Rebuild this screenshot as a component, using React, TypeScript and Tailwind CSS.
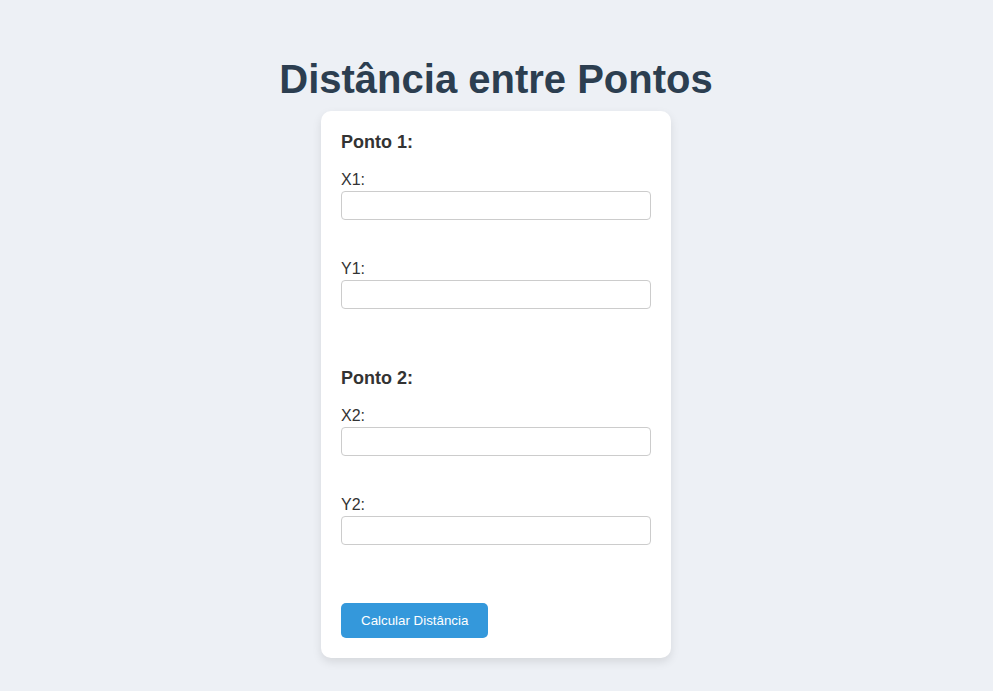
import { useState } from "react";

type Field = { key: string; label: string };

const groups: { title: string; fields: Field[] }[] = [
  { title: "Ponto 1:", fields: [{ key: "x1", label: "X1:" }, { key: "y1", label: "Y1:" }] },
  { title: "Ponto 2:", fields: [{ key: "x2", label: "X2:" }, { key: "y2", label: "Y2:" }] },
];

export default function App() {
  const [values, setValues] = useState<Record<string, string>>({});

  return (
    <div className="min-h-screen bg-[#edf0f5] flex flex-col items-center pt-[56px] pr-[1px] font-['Liberation_Sans',Arial,sans-serif]">
      <h1 className="text-[40px] leading-[46px] font-bold text-[#2c3e50]">Distância entre Pontos</h1>

      <div className="mt-[9px] w-[350px] bg-white rounded-[10px] p-[20px] shadow-[0_4px_10px_rgba(0,0,0,0.1)] flex flex-col">
        {groups.map((g, gi) => (
          <div key={g.title} className={gi > 0 ? "mt-[58px]" : ""}>
            <h3 className="pt-[1px] text-[18px] leading-[21px] font-bold text-[#333] mb-[17px]">{g.title}</h3>
            {g.fields.map((f, fi) => (
              <div key={f.key} className={fi > 0 ? "mt-[39px]" : ""}>
                <label htmlFor={f.key} className="block text-[16px] leading-[19px] mb-[2px] text-[#333]">
                  {f.label}
                </label>
                <input
                  id={f.key}
                  type="number"
                  value={values[f.key] ?? ""}
                  onChange={(e) => setValues({ ...values, [f.key]: e.target.value })}
                  className="block w-full h-[29px] px-[5px] border border-[#ccc] rounded-[4px] bg-white text-[14px] outline-none"
                />
              </div>
            ))}
          </div>
        ))}

        <div className="mt-[58px]">
          <button className="h-[35px] px-[20px] rounded-[5px] bg-[#3498db] text-white text-[13.33px]">
            Calcular Distância
          </button>
        </div>
      </div>
    </div>
  );
}
